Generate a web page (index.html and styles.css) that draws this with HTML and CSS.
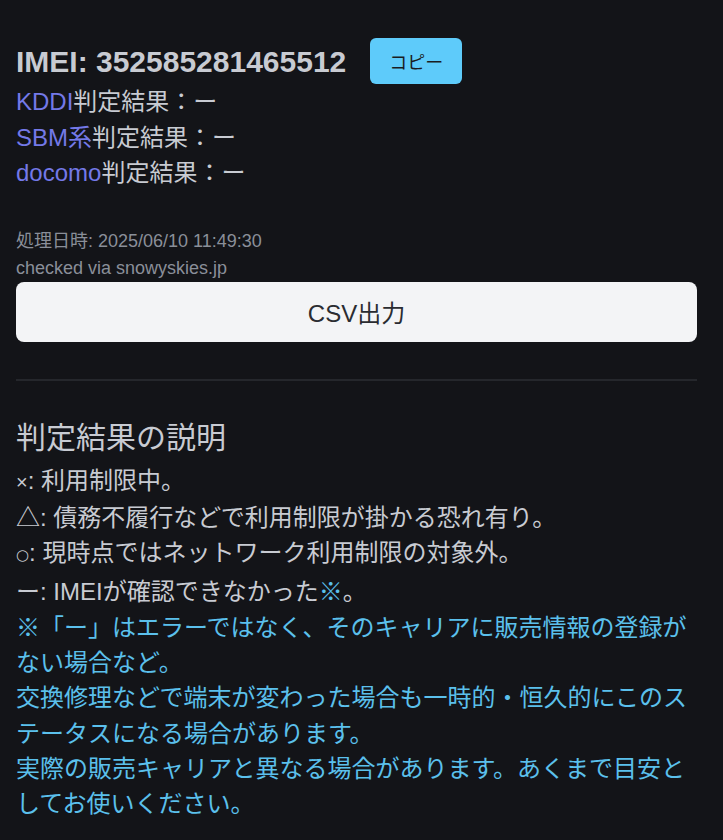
FILE: index.html
```html
<!DOCTYPE html>
<html lang="ja">
<head>
<meta charset="utf-8">
<title>IMEI判定結果</title>
<link rel="stylesheet" href="styles.css">
</head>
<body>
<main class="page">
  <div class="imei-row">
    <h2 class="imei">IMEI: 352585281465512</h2>
    <button class="copy" type="button">コピー</button>
  </div>
  <div class="results">
    <div class="line"><span class="carrier">KDDI</span>判定結果：ー</div>
    <div class="line"><span class="carrier">SBM系</span>判定結果：ー</div>
    <div class="line"><span class="carrier">docomo</span>判定結果：ー</div>
  </div>
  <div class="meta">
    <div>処理日時: 2025/06/10 11:49:30</div>
    <div>checked via snowyskies.jp</div>
  </div>
  <button class="csv" type="button">CSV出力</button>
  <hr class="divider">
  <h3 class="legend-title">判定結果の説明</h3>
  <div class="legend">
    <div><span class="latin">×</span>: 利用制限中。</div>
    <div>△: 債務不履行などで利用制限が掛かる恐れ有り。</div>
    <div><span class="circle">○</span>: 現時点ではネットワーク利用制限の対象外。</div>
    <div>ー: IMEIが確認できなかった<span class="note">※</span>。</div>
    <div class="note">※「ー」はエラーではなく、そのキャリアに販売情報の登録がない場合など。</div>
    <div class="note">交換修理などで端末が変わった場合も一時的・恒久的にこのステータスになる場合があります。</div>
    <div class="note">実際の販売キャリアと異なる場合があります。あくまで目安としてお使いください。</div>
  </div>
</main>
</body>
</html>
```

FILE: styles.css
```css
* { box-sizing: border-box; }

html, body {
  margin: 0;
  padding: 0;
  background: #131418;
}

body {
  font-family: "Liberation Sans", "Noto Sans CJK JP", sans-serif;
  color: #c8cbd2;
  font-size: 24px;
  line-height: 35.5px;
}

.page {
  padding: 38px 26px 0 16px;
  display: flex;
  flex-direction: column;
}

.imei-row {
  display: flex;
  align-items: center;
  height: 46px;
}

.imei {
  margin: 0;
  font-size: 30px;
  font-weight: bold;
  line-height: 45px;
  color: #c8cbd2;
}

.copy {
  margin-left: 24px;
  width: 92px;
  height: 46px;
  border: none;
  border-radius: 6px;
  background: #5ecbfa;
  color: #1a1c22;
  font-family: "Liberation Sans", "Noto Sans CJK JP", sans-serif;
  font-size: 18px;
  padding: 0;
}

.results .line {
  line-height: 35.5px;
}

.carrier {
  color: #7479e8;
}

.meta {
  margin-top: 37px;
  font-size: 18px;
  line-height: 27px;
  color: #8a8f99;
}

.csv {
  width: 100%;
  height: 60px;
  border: none;
  border-radius: 8px;
  background: #f3f4f6;
  color: #2a2c31;
  font-family: "Liberation Sans", "Noto Sans CJK JP", sans-serif;
  font-size: 24px;
  padding: 0;
}

.divider {
  margin: 37px 0 0;
  border: none;
  height: 2px;
  background: #25272c;
}

.legend-title {
  margin: 34px 0 0;
  font-size: 30px;
  font-weight: normal;
  line-height: 45px;
  color: #c8cbd2;
}

.legend {
  margin-top: 3px;
  line-height: 35.33px;
}

.latin {
  font-family: "Liberation Sans", sans-serif;
  font-size: 20px;
}

.circle {
  font-family: "DejaVu Sans", sans-serif;
  font-size: 15px;
  display: inline-block;
  transform: translateY(-1px);
}

.note {
  color: #5bc0ec;
}
```
